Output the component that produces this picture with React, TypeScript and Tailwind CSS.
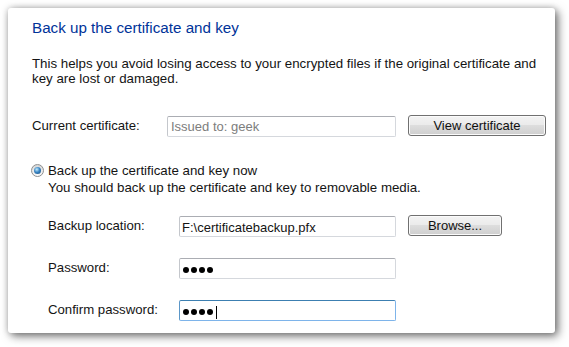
import React from "react";

const inputBase =
  "shrink-0 h-[21px] rounded-[2px] border bg-white border-[#d5d8dd] border-t-[#abadb3] border-l-[#c4c7cc]";

const buttonBase =
  "shrink-0 h-[21px] -mt-px ml-[12px] rounded-[3px] border border-[#707070] bg-[linear-gradient(to_bottom,#f3f3f3_0%,#ebebeb_45%,#dddddd_50%,#cfcfcf_100%)] shadow-[inset_0_0_0_1px_#fbfbfb] text-[13px] leading-[19px] text-center text-[#111]";

const labelBase = "shrink-0 pt-[2px] text-[13.2px] leading-[15px]";

const PasswordDots: React.FC<{ caret?: boolean }> = ({ caret }) => (
  <div className="flex items-center h-full pl-[3px] pt-[3px] gap-[2px]">
    {[0, 1, 2, 3].map((i) => (
      <div key={i} className="w-[6px] h-[6px] rounded-full bg-black" />
    ))}
    {caret && <div className="w-px h-[13px] bg-black ml-px" />}
  </div>
);

const RadioOn: React.FC = () => (
  <div className="shrink-0 w-[13px] h-[13px] -ml-px rounded-full border border-[#8e8f8f] bg-[linear-gradient(to_bottom,#d6d6d6,#fbfbfb)] flex items-center justify-center">
    <div className="w-[7px] h-[7px] rounded-full bg-[radial-gradient(circle_at_40%_35%,#c4ecfd_0%,#3a86c4_45%,#174a7c_100%)]" />
  </div>
);

export default function App() {
  return (
    <div
      className="w-[569px] h-[347px] bg-white pl-[8px] pt-[8px] text-[#141414] overflow-hidden"
      style={{ fontFamily: '"Liberation Sans", Arial, sans-serif' }}
    >
      <div className="w-[547px] h-[325px] bg-white rounded-[3px] px-6 pt-[10px] shadow-[3px_3px_10px_rgba(0,0,0,0.55),0_0_6px_rgba(0,0,0,0.18)]">
        {/* Heading */}
        <h1 className="text-[15.2px] leading-[20px] text-[#003399] font-normal">
          Back up the certificate and key
        </h1>

        {/* Description */}
        <p className="mt-[18px] text-[13.3px] leading-[15px] whitespace-nowrap">
          This helps you avoid losing access to your encrypted files if the
          original certificate and
          <br />
          key are lost or damaged.
        </p>

        {/* Current certificate */}
        <div className="mt-[30px] flex items-start">
          <div className={`${labelBase} w-[135px]`}>Current certificate:</div>
          <div className={`${inputBase} w-[229px] pl-[3px] text-[13px] leading-[19px] text-[#7d7d7d]`}>
            Issued to: geek
          </div>
          <button className={`${buttonBase} w-[138px]`}>View certificate</button>
        </div>

        {/* Radio option */}
        <div className="mt-[25px] text-[13.3px] leading-[17px] whitespace-nowrap">
          <div className="flex items-center">
            <RadioOn />
            <span className="ml-[4px]">Back up the certificate and key now</span>
          </div>
          <div className="pl-[16px]">
            You should back up the certificate and key to removable media.
          </div>
        </div>

        {/* Backup location */}
        <div className="mt-[20px] pl-[16px] flex items-start">
          <div className={`${labelBase} w-[131px]`}>Backup location:</div>
          <div className={`${inputBase} w-[217px] pl-[2px] pt-[2px] text-[13px] leading-[17px]`}>
            F:\certificatebackup.pfx
          </div>
          <button className={`${buttonBase} w-[94px]`}>Browse...</button>
        </div>

        {/* Password */}
        <div className="mt-[21px] pl-[16px] flex items-start">
          <div className={`${labelBase} w-[131px]`}>Password:</div>
          <div className={`${inputBase} w-[217px]`}>
            <PasswordDots />
          </div>
        </div>

        {/* Confirm password */}
        <div className="mt-[21px] pl-[16px] flex items-start">
          <div className={`${labelBase} w-[131px]`}>Confirm password:</div>
          <div className="shrink-0 h-[21px] w-[217px] rounded-[2px] border bg-white border-[#7eb4ea] border-t-[#3c7fb1] border-l-[#5c97c8]">
            <PasswordDots caret />
          </div>
        </div>
      </div>
    </div>
  );
}
